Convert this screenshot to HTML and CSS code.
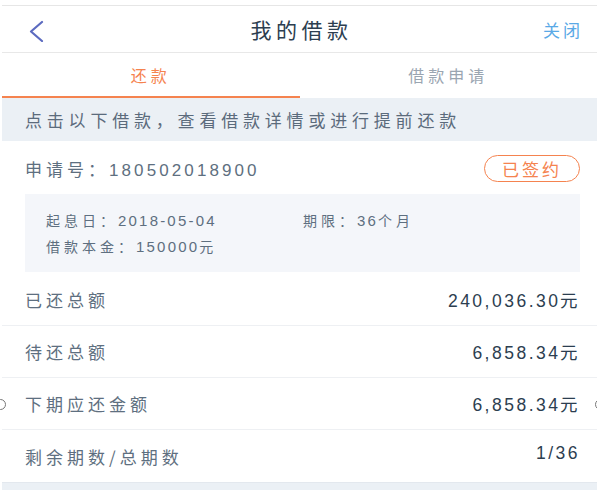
FILE: index.html
```html
<!DOCTYPE html>
<html lang="zh-CN">
<head>
  <meta charset="UTF-8" />
  <meta name="viewport" content="width=device-width, initial-scale=1.0">
  <title>我的借款</title>
  <link rel="stylesheet" href="styles.css">
</head>
<body>
  <div class="page">
    <div class="navbar">
      <div class="nav-back">
        <svg width="17" height="22" viewBox="0 0 17 22"><path d="M14 2 L3 11.5 L14 21" fill="none" stroke="#5c6bc0" stroke-width="2.2" stroke-linecap="round" stroke-linejoin="round"/></svg>
      </div>
      <div class="nav-title">我的借款</div>
      <div class="nav-close">关闭</div>
    </div>

    <div class="tabs">
      <div class="tab active">还款</div>
      <div class="tab">借款申请</div>
    </div>

    <div class="banner">点击以下借款，查看借款详情或进行提前还款</div>

    <div class="apply">
      <div class="apply-no">申请号：<span class="num">180502018900</span></div>
      <div class="badge">已签约</div>
    </div>

    <div class="details">
      <div class="details-row">
        <div class="details-cell">起息日：<span class="num">2018-05-04</span></div>
        <div class="details-cell">期限：<span class="num">36</span>个月</div>
      </div>
      <div class="details-row">
        <div class="details-cell">借款本金：<span class="num">150000</span>元</div>
      </div>
    </div>

    <div class="list">
      <div class="item">
        <span class="label">已还总额</span>
        <span class="value">240,036.30元</span>
      </div>
      <div class="item">
        <span class="label">待还总额</span>
        <span class="value">6,858.34元</span>
      </div>
      <div class="item">
        <span class="dot dot-left"></span>
        <span class="label">下期应还金额</span>
        <span class="value">6,858.34元</span>
        <span class="dot dot-right"></span>
      </div>
      <div class="item last">
        <span class="label">剩余期数/总期数</span>
        <span class="value">1/36</span>
      </div>
    </div>
    <div class="footer-band"></div>
  </div>
</body>
</html>
```

FILE: styles.css
```css
html, body {
  margin: 0;
  padding: 0;
  background: #fff;
}
body {
  font-family: "Noto Sans CJK SC", "Liberation Sans", sans-serif;
  color: #5e6f80;
  overflow: hidden;
}
.page {
  margin-left: 2px;
  padding-top: 5px;
  height: 485px;
  display: flex;
  flex-direction: column;
}
.num {
  font-family: "Liberation Sans", sans-serif;
  letter-spacing: 3px;
}

/* nav */
.navbar {
  height: 46px;
  border-top: 1px solid #e6e6e6;
  border-bottom: 1px solid #e8e8e8;
  display: flex;
  align-items: center;
}
.nav-back {
  width: 80px;
  padding-left: 26px;
  padding-top: 4px;
  box-sizing: border-box;
  display: flex;
  align-items: center;
}
.nav-title {
  flex: 1;
  text-align: center;
  font-size: 21px;
  letter-spacing: 4.5px;
  color: #2c3e50;
  padding-left: 4px;
}
.nav-close {
  width: 80px;
  box-sizing: border-box;
  text-align: right;
  padding-right: 14px;
  font-size: 17px;
  letter-spacing: 3px;
  color: #5aa9e6;
}

/* tabs */
.tabs {
  display: flex;
  height: 45px;
}
.tab {
  flex: 1;
  display: flex;
  align-items: center;
  justify-content: center;
  font-size: 16px;
  letter-spacing: 4px;
  color: #9aa5b1;
  border-bottom: 2px solid transparent;
}
.tab.active {
  color: #f5834f;
  border-bottom-color: #f5834f;
}

/* banner */
.banner {
  height: 43px;
  background: #ebf0f5;
  display: flex;
  align-items: center;
  padding-left: 23px;
  font-size: 17px;
  letter-spacing: 4.8px;
  color: #5b6b7c;
}

/* apply row */
.apply {
  height: 50px;
  box-sizing: border-box;
  padding: 5px 17px 0 23px;
  display: flex;
  align-items: center;
  justify-content: space-between;
}
.apply-no {
  font-size: 17px;
  letter-spacing: 4px;
}
.apply-no .num {
  font-size: 17px;
  letter-spacing: 3.1px;
}
.badge {
  border: 1px solid #f5834f;
  color: #f5834f;
  border-radius: 14px;
  height: 25px;
  width: 94px;
  display: flex;
  align-items: center;
  justify-content: center;
  font-size: 17px;
  letter-spacing: 3px;
}

/* details */
.details {
  margin: 3px 17px 2px 23px;
  height: 78px;
  background: #f4f6fa;
  padding: 13px 0 0 21px;
  box-sizing: border-box;
  font-size: 14px;
  letter-spacing: 4px;
}
.details-row {
  display: flex;
  height: 26px;
  align-items: center;
}
.details-cell {
  width: 257px;
}
.details .num {
  font-size: 15px;
  letter-spacing: 2.2px;
}

/* list */
.list {
  display: flex;
  flex-direction: column;
}
.item {
  height: 51px;
  border-bottom: 1px solid #eef0f3;
  display: flex;
  align-items: center;
  justify-content: space-between;
  padding: 0 17px 0 23px;
  position: relative;
}
.item.last {
  border-bottom: none;
  height: 52px;
}
.label {
  font-size: 17px;
  letter-spacing: 4px;
  color: #5e6f80;
}
.value {
  font-family: "Liberation Sans", sans-serif;
  font-size: 17.5px;
  letter-spacing: 2.5px;
  color: #2c3e50;
}
.item.last .value {
  padding-bottom: 5px;
}
.dot {
  position: absolute;
  width: 9px;
  height: 9px;
  border: 1px solid #777;
  border-radius: 50%;
  top: 21px;
}
.dot-left {
  left: -7px;
}
.dot-right {
  right: -9px;
}
.footer-band {
  flex: 1;
  background: #ebf0f5;
  border-top: 1px solid #e3e8ee;
}
```
